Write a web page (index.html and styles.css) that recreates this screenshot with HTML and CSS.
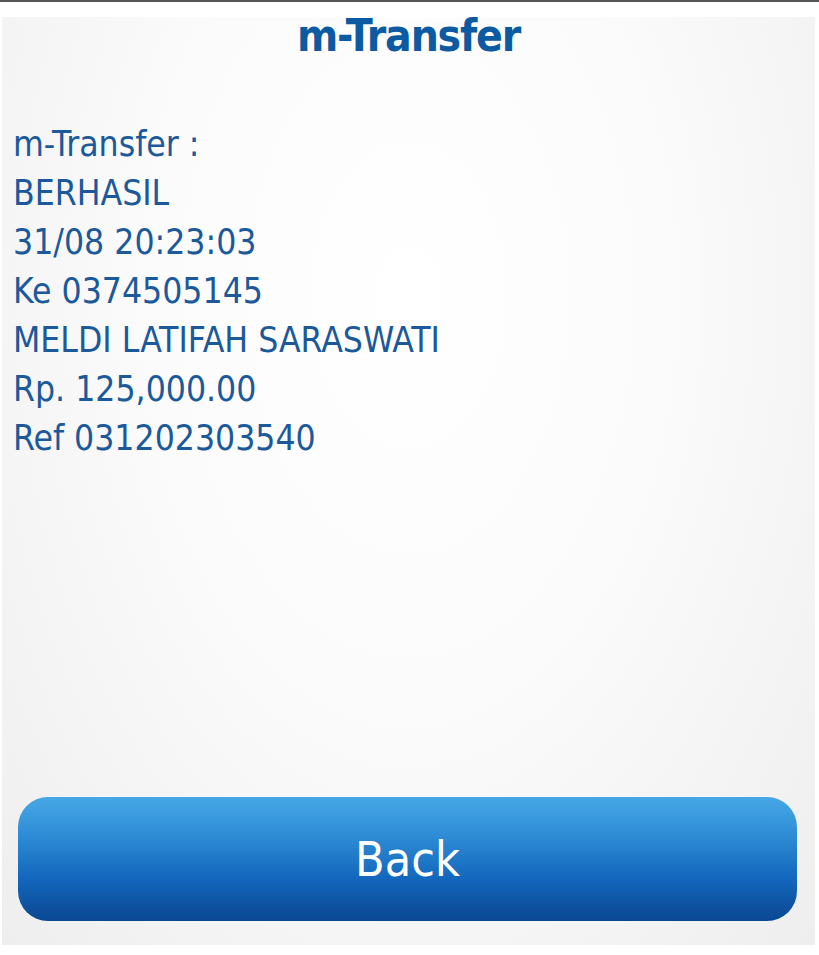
FILE: index.html
```html
<!DOCTYPE html>
<html>
<head>
<meta charset="utf-8">
<link rel="stylesheet" href="styles.css">
</head>
<body>
<div class="topline"></div>
<div class="panel">
  <h1 class="title">m-Transfer</h1>
  <div class="message">
    <div class="line">m-Transfer :</div>
    <div class="line">BERHASIL</div>
    <div class="line">31/08 20:23:03</div>
    <div class="line">Ke 0374505145</div>
    <div class="line">MELDI LATIFAH SARASWATI</div>
    <div class="line">Rp. 125,000.00</div>
    <div class="line">Ref 031202303540</div>
  </div>
  <div class="spacer"></div>
  <button class="back">Back</button>
</div>
</body>
</html>
```
FILE: styles.css
```css
html, body {
  margin: 0;
  padding: 0;
  background: #ffffff;
  width: 819px;
  height: 955px;
  overflow: hidden;
}
body {
  font-family: "DejaVu Sans Condensed", "Roboto", sans-serif;
  display: flex;
  flex-direction: column;
}
.topline {
  height: 2px;
  background: #555555;
}
.panel {
  margin: 15px 4px 10px 2px;
  height: 928px;
  box-sizing: border-box;
  background: radial-gradient(ellipse at 50% 30%, #ffffff 0%, #fbfbfb 45%, #efeeef 100%);
  display: flex;
  flex-direction: column;
  padding: 0 0 24px 0;
}
.title {
  margin: -6px 0 0 0;
  text-align: center;
  font-size: 44px;
  font-weight: bold;
  color: #0c5aa2;
  line-height: 50px;
  letter-spacing: -1.2px;
}
.message {
  margin-top: 58px;
  padding-left: 11px;
  color: #1b599b;
  font-size: 35.2px;
  line-height: 49px;
}
.spacer {
  flex: 1;
}
.back {
  margin: 0 18px 0 16px;
  height: 124px;
  border: none;
  border-radius: 30px;
  background: linear-gradient(to bottom, #46a8e6 0%, #2f8dd6 30%, #1368bd 65%, #0a4792 100%);
  color: #ffffff;
  font-family: "DejaVu Sans Condensed", "Roboto", sans-serif;
  font-size: 48px;
  padding: 0;
}
```
